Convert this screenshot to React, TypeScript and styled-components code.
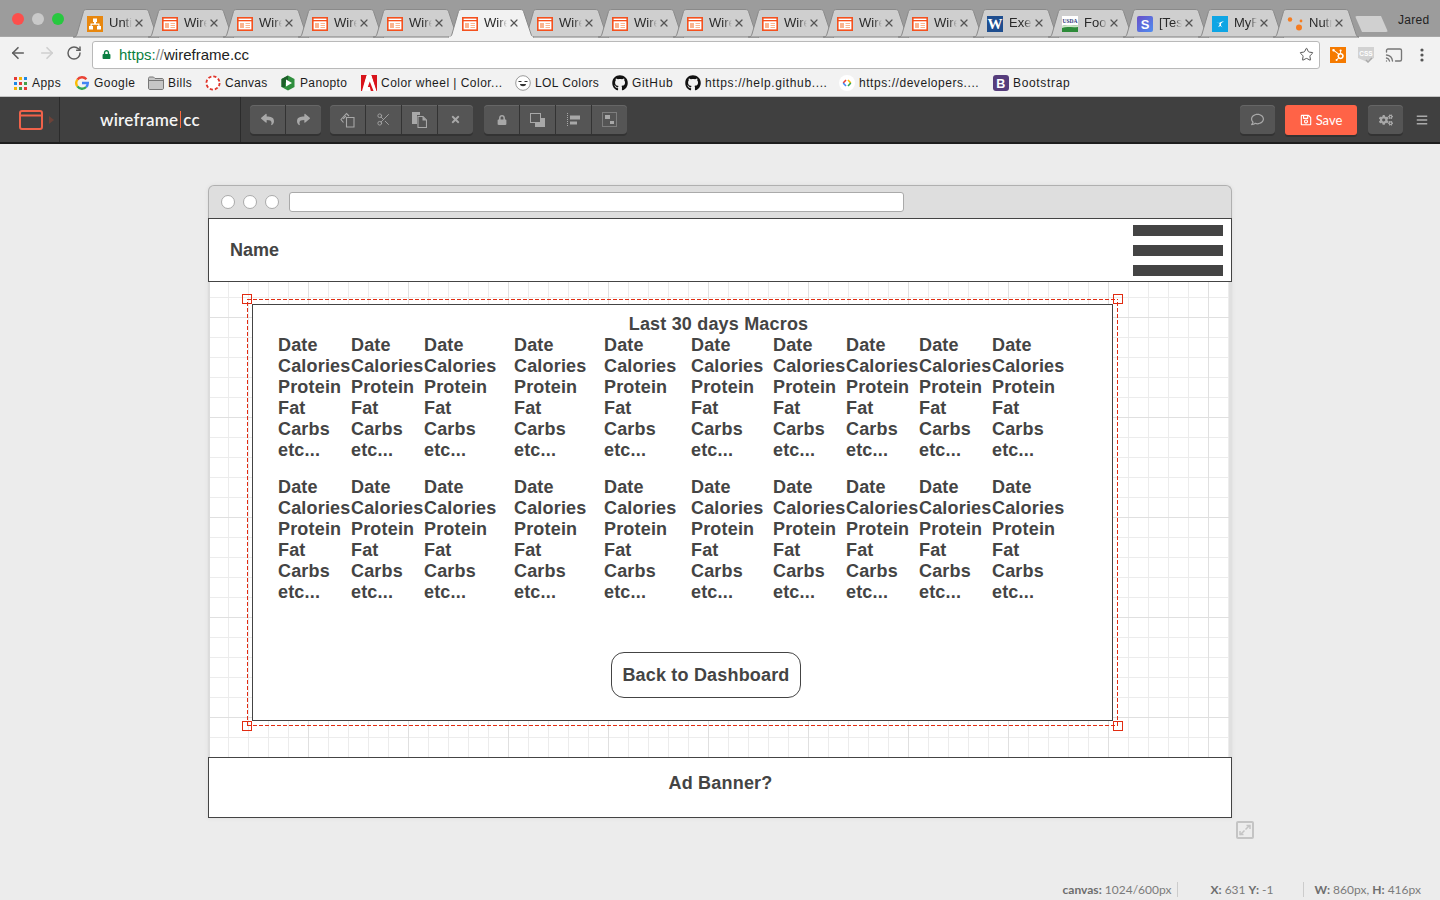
import React from "react";
import styled, { createGlobalStyle } from "styled-components";
import { ArrowLeft, ArrowRight, RotateCw, Star, Cast, X, Scissors } from "lucide-react";
import { FaReply, FaShare, FaTimes, FaLock, FaRegSave, FaRegComment, FaCogs, FaBars, FaGithub } from "react-icons/fa";
import { SiHubspot } from "react-icons/si";

const Global = createGlobalStyle`
  html, body { margin: 0; padding: 0; height: 900px; overflow: hidden; background: #ececec; }
  #root { height: 900px; }
  * { box-sizing: border-box; }
`;
const Page = styled.div`display:flex;flex-direction:column;width:1440px;height:900px;font-family:"Liberation Sans",Arial,sans-serif;background:#ececec;`;

/* ---------- browser tab strip ---------- */
const TabStrip = styled.div`display:flex;align-items:flex-end;height:37px;background:#9c9c9c;padding-left:73px;position:relative;border-bottom:1px solid #a8a8a8;`;
const Traffic = styled.div`position:absolute;left:12px;top:13px;display:flex;gap:8px;`;
const Light = styled.span<{ $c: string }>`width:12px;height:12px;border-radius:50%;background:${p => p.$c};`;
const TabEl = styled.div<{ $active?: boolean }>`
  position:relative;width:86px;height:28px;margin-right:-11px;flex:none;
  margin-bottom:-1px;z-index:${p => (p.$active ? 5 : 1)};
`;
const TabShape = styled.svg`position:absolute;left:0;top:0;width:86px;height:29px;`;
const TabIcon = styled.span`position:absolute;left:14px;top:7px;width:16px;height:16px;display:flex;`;
const TabText = styled.span`position:absolute;left:36px;top:6px;width:23px;font-size:13px;line-height:16px;color:#2a2a2a;white-space:nowrap;overflow:hidden;
  -webkit-mask-image:linear-gradient(90deg,#000 65%,transparent 100%);mask-image:linear-gradient(90deg,#000 65%,transparent 100%);`;
const TabClose = styled.span`position:absolute;left:60px;top:8px;width:12px;height:12px;display:flex;color:#555;`;
const NewTab = styled.span`position:absolute;left:1355px;top:16px;width:33px;height:16px;background:#d0d0d0;clip-path:polygon(0 0,26px 0,33px 100%,7px 100%);border-radius:2px;`;
const Profile = styled.span`position:absolute;left:1398px;top:13px;font-size:12px;line-height:14px;color:#222;letter-spacing:.3px;`;

/* ---------- browser toolbar ---------- */
const NavBar = styled.div`display:flex;align-items:center;height:33px;background:#f2f2f2;padding:0 0 1px 9px;`;
const NavBtn = styled.span<{ $off?: boolean; $w: number }>`display:flex;width:${p => p.$w}px;color:${p => (p.$off ? "#cfcfcf" : "#5f5f5f")};flex:none;`;
const Omni = styled.div`display:flex;align-items:center;width:1228px;height:28px;margin-top:3px;background:#fff;border:1px solid #b9b9b9;border-radius:3px;padding:0 5px 0 9px;flex:none;`;
const Url = styled.span`flex:1;font-size:15px;line-height:16px;color:#222;margin-left:8px;`;
const Green = styled.span`color:#0b7f3f;`;
const Grey = styled.span`color:#888;`;
const Ext = styled.div`display:flex;align-items:center;margin-left:10px;height:28px;margin-top:3px;`;
const ExtIcon = styled.span<{ $ml?: number; $w?: number }>`display:flex;align-items:center;justify-content:center;flex:none;height:16px;width:${p => p.$w ?? 16}px;margin-left:${p => p.$ml ?? 0}px;`;
const HubIcon = styled(ExtIcon)`background:#f57a00;color:#fff;`;
const Bookmarks = styled.div`display:flex;align-items:center;height:27px;background:#f2f2f2;padding-left:12px;border-bottom:1px solid #c4c4c4;`;
const Mark = styled.div<{ $w: number; $ls: number }>`display:flex;align-items:center;gap:4px;width:${p => p.$w}px;flex:none;font-size:12px;letter-spacing:${p => p.$ls}px;color:#1c1c1c;white-space:nowrap;`;
const MarkIcon = styled.span`display:flex;width:16px;height:16px;flex:none;align-items:center;justify-content:center;`;

/* ---------- app toolbar ---------- */
const AppBar = styled.div`display:flex;align-items:center;height:47px;background:#404040;border-bottom:2px solid #1e1e1e;position:relative;`;
const LogoCell = styled.div`display:flex;align-items:center;width:60px;height:45px;border-right:1px solid #2b2b2b;padding-left:19px;gap:6px;flex:none;`;
const BrandCell = styled.div`display:flex;align-items:center;justify-content:flex-start;width:181px;height:45px;border-right:1px solid #2b2b2b;padding-left:40px;font-family:Lato,sans-serif;font-size:17px;font-weight:600;letter-spacing:.2px;color:#f4f4f4;flex:none;`;
const Bar = styled.span`display:inline-block;width:1px;height:17px;background:#ff6a3d;margin:0 2px;`;
const Group = styled.div<{ $ml: number }>`display:flex;margin-left:${p => p.$ml}px;height:29px;border-radius:4px;background:#555;box-shadow:0 2px 0 #333, inset 0 1px 0 #666;flex:none;overflow:hidden;`;
const ToolBtn = styled.span`display:flex;align-items:center;justify-content:center;width:36px;height:29px;color:#a8a8a8;border-left:1px solid #333;&:first-child{border-left:0;width:35px;}`;
const SaveBtn = styled.span`display:flex;align-items:center;justify-content:center;gap:4px;width:72px;height:30px;margin-left:10px;background:#ff6347;color:#fff;font-family:Lato,sans-serif;font-size:13px;border-radius:3px;box-shadow:0 2px 0 #333;flex:none;`;
const Burger = styled.span`display:flex;margin-left:13px;color:#aaa;flex:none;`;

/* ---------- workspace ---------- */
const Workspace = styled.main`flex:1;display:flex;flex-direction:column;padding:41px 0 0 208px;min-height:0;position:relative;`;
const Frame = styled.div`width:1024px;display:flex;flex-direction:column;box-shadow:0 0 3px 1px #e2e2e2;border-radius:6px 6px 0 0;`;
const FrameHead = styled.div`display:flex;align-items:center;height:33px;background:#dedede;border:1px solid #b0b0b0;border-bottom:0;border-radius:6px 6px 0 0;padding-left:12px;gap:8px;`;
const Dot = styled.span`width:14px;height:14px;border-radius:50%;background:#fff;border:1px solid #aaa;flex:none;`;
const FrameUrl = styled.span`width:615px;height:20px;margin-left:2px;background:#fff;border:1px solid #aaa;border-radius:3px;flex:none;`;
const NameBox = styled.div`display:flex;align-items:center;justify-content:space-between;height:64px;background:#fff;border:1px solid #444;padding:0 8px 0 21px;`;
const Label = styled.span`font-size:18px;font-weight:700;color:#444;line-height:21px;`;
const Menu = styled.div`display:flex;flex-direction:column;gap:9px;`;
const MenuBar = styled.span`display:block;width:90px;height:11px;background:#444;`;
const GridArea = styled.div`
  position:relative;height:475px;background-color:#fff;
  background-image:
    linear-gradient(90deg,#e0e0e0 1px,transparent 1px),
    linear-gradient(#e0e0e0 1px,transparent 1px),
    linear-gradient(90deg,#ececec 1px,transparent 1px),
    linear-gradient(#ececec 1px,transparent 1px);
  background-size:100px 100px,100px 100px,20px 20px,20px 20px;
  background-position:0 0,0 35px,0 0,0 15px;
  box-shadow:inset 2px 0 0 #dcdcdc, inset -3px 0 0 #e0e0e0;
`;
const Selection = styled.div`
  position:absolute;left:39px;top:17px;width:871px;height:427px;padding:5px;
  background:
    repeating-linear-gradient(90deg,#e12c12 0 4px,transparent 4px 6px) 0 0/100% 1px no-repeat,
    repeating-linear-gradient(90deg,#e12c12 0 4px,transparent 4px 6px) 0 100%/100% 1px no-repeat,
    repeating-linear-gradient(0deg,#e12c12 0 4px,transparent 4px 6px) 0 0/1px 100% no-repeat,
    repeating-linear-gradient(0deg,#e12c12 0 4px,transparent 4px 6px) 100% 0/1px 100% no-repeat;
`;
const Handle = styled.span<{ $x: "l" | "r"; $y: "t" | "b" }>`
  position:absolute;width:10px;height:10px;border:1px solid #e12c12;background:transparent;
  ${p => (p.$x === "l" ? "left:-5px;" : "right:-5px;")}
  ${p => (p.$y === "t" ? "top:-5px;" : "bottom:-5px;")}
`;
const Box = styled.div`width:861px;height:417px;background:#fff;border:1px solid #444;padding:9px 0 0 25px;color:#444;font-weight:700;font-size:18px;line-height:21px;letter-spacing:.18px;`;
const Title = styled.div`text-align:center;padding-left:47px;`;
const Table = styled.div`display:grid;grid-template-columns:73px 73px 90px 90px 87px 82px 73px 73px 73px 73px;margin-bottom:16px;`;
const Cell = styled.div`white-space:nowrap;`;
const BackBtn = styled.div`display:flex;align-items:center;justify-content:center;width:190px;height:46px;margin:49px 0 0 333px;border:1px solid #444;border-radius:13px;background:#fff;`;
const AdBox = styled.div`display:flex;justify-content:center;padding:15px 0 0 1px;height:61px;background:#fff;border:1px solid #444;`;
const AdLabel = styled(Label)`letter-spacing:.2px;`;
const ResizeRow = styled.div`display:flex;margin:3px 0 0 1028px;color:#c4c4c4;`;
const StatusBar = styled.footer`display:flex;align-items:center;margin-top:auto;margin-left:-208px;height:22px;justify-content:flex-end;padding-right:19px;font-family:Lato,sans-serif;font-size:12px;line-height:15px;color:#7b7b7b;`;
const Stat = styled.span<{ $pl?: number; $pr?: number; $sep?: boolean }>`display:block;height:15px;white-space:pre;
  padding-left:${p => p.$pl ?? 0}px;padding-right:${p => p.$pr ?? 0}px;
  ${p => (p.$sep ? "border-right:1px solid #ccc;" : "")}`;
const B = styled.b`font-weight:700;color:#6e6e6e;`;

/* ---------- drawings ---------- */
const WireIcon = () => (
  <svg width="16" height="14" viewBox="0 0 16 14" style={{ marginTop: 1 }}>
    <rect x=".8" y=".8" width="14.4" height="12.4" fill="#fff" stroke="#f4511e" strokeWidth="1.6" />
    <rect x="1" y="3" width="14" height="1.3" fill="#f4511e" />
    <path d="M3 6h4v5H3z" fill="#fbb48f" />
    <path d="M8.500 6H13v1H8.500zM8.500 8H13v1H8.500zM8.500 10H13v1H8.500z" fill="#fbb48f" />
  </svg>
);
const DrawIcon = () => (
  <svg width="16" height="16" viewBox="0 0 16 16">
    <rect width="16" height="16" fill="#e8870e" />
    <path d="M6 2.500h4v3.500H9v1.500h3.500V10H14v3.500h-4V10h1.300V8.700H4.700V10H6v3.500H2V10h1.500V7.500H7V6H6z" fill="#fff" />
  </svg>
);
const WordIcon = () => (
  <svg width="16" height="16" viewBox="0 0 16 16">
    <rect width="16" height="16" fill="#1f4e8f" />
    <text x="8" y="13" textAnchor="middle" fontFamily="Liberation Serif" fontWeight="700" fontSize="15" fill="#fff">W</text>
  </svg>
);
const UsdaIcon = () => (
  <svg width="16" height="16" viewBox="0 0 16 16">
    <rect width="16" height="16" fill="#fff" />
    <text x="8" y="7" textAnchor="middle" fontFamily="Liberation Serif" fontWeight="700" fontSize="5.500" fill="#2c3a7a">USDA</text>
    <path d="M0 10c5-2 10 0 16-1v7H0z" fill="#2e8b3a" />
    <path d="M0 10c5-2 10 0 16-1v2c-6 1-11-1-16 1z" fill="#cfe5c9" />
  </svg>
);
const SlackS = () => (
  <svg width="16" height="16" viewBox="0 0 16 16">
    <defs><linearGradient id="sg" x1="0" y1="0" x2="1" y2="1"><stop offset="0" stopColor="#6a4fc8" /><stop offset="1" stopColor="#4f8ef0" /></linearGradient></defs>
    <rect width="16" height="16" rx="2" fill="url(#sg)" />
    <text x="8" y="12.500" textAnchor="middle" fontFamily="Liberation Sans" fontWeight="700" fontSize="13" fill="#fff">S</text>
  </svg>
);
const MfpIcon = () => (
  <svg width="16" height="16" viewBox="0 0 16 16">
    <rect width="16" height="16" fill="#0ea5e4" />
    <path d="M4 6l3 1 2-1 3-1-3 2.500v2l1.500 2-2-1.500-2.500 1 1.500-2V7.500z" fill="#fff" />
  </svg>
);
const NutIcon = () => (
  <svg width="16" height="16" viewBox="0 0 16 16">
    <circle cx="3" cy="3.500" r="2.200" fill="#f57c20" />
    <circle cx="14" cy="5" r="1.400" fill="#f57c20" />
    <circle cx="12" cy="11.500" r="3" fill="#f57c20" />
  </svg>
);
const AppsIcon = () => {
  const c = ["#e53935", "#f4b400", "#1e88e5", "#1e88e5", "#e53935", "#43a047", "#f4b400", "#43a047", "#e53935"];
  return (
    <svg width="13" height="13" viewBox="0 0 13 13">
      {c.map((f, i) => <rect key={i} x={(i % 3) * 5} y={Math.floor(i / 3) * 5} width="3" height="3" fill={f} />)}
    </svg>
  );
};
const GoogleIcon = () => (
  <svg width="14" height="14" viewBox="0 0 14 14" fill="none" strokeWidth="2.400">
    <path d="M11.400 3.200A5.800 5.800 0 0 0 2.400 3.600" stroke="#ea4335" />
    <path d="M2.400 3.600a5.800 5.800 0 0 0 0 6.800" stroke="#fbbc05" />
    <path d="M2.400 10.400a5.800 5.800 0 0 0 8.800.6" stroke="#34a853" />
    <path d="M11.200 11a5.800 5.800 0 0 0 1.600-4H7" stroke="#4285f4" />
  </svg>
);
const FolderIcon = () => (
  <svg width="16" height="14" viewBox="0 0 16 14">
    <path d="M.5 2.500C.5 1.500 1 1 2 1h3.500l1.500 1.500h7c1 0 1.500.5 1.500 1.500v8c0 1-.5 1.500-1.500 1.500H2c-1 0-1.500-.5-1.500-1.500z" fill="#c6c6c6" stroke="#777" />
    <path d="M1 4.500h14" stroke="#777" />
  </svg>
);
const CanvasIcon = () => (
  <svg width="16" height="16" viewBox="0 0 16 16">
    <circle cx="8" cy="8" r="6.600" fill="#fff" stroke="#e0352b" strokeWidth="1.800" strokeDasharray="3.200 2" />
  </svg>
);
const PanoptoIcon = () => (
  <svg width="16" height="16" viewBox="0 0 16 16">
    <path d="M8 .5 14.500 4v8L8 15.500 1.500 12V4z" fill="#2f8f3e" />
    <path d="M1.500 4 8 .5v5L5 8v4H1.500z" fill="#1d5f2a" />
    <path d="M6 4.500 12 8l-6 3.500z" fill="#fff" />
  </svg>
);
const AdobeIcon = () => (
  <svg width="16" height="16" viewBox="0 0 16 16">
    <rect width="16" height="16" fill="#d8141b" />
    <path d="M5.500 0h5l5 16h-3L8.800 6.500 6.800 12h2l1 4H1z" fill="#fff" />
    <path d="M0 0h5.500L0 16zM16 0h-5.500L16 16z" fill="#d8141b" />
  </svg>
);
const LolIcon = () => (
  <svg width="16" height="16" viewBox="0 0 16 16">
    <circle cx="8" cy="8" r="7.300" fill="#fff" stroke="#999" />
    <path d="M3.500 6.500h3M9.500 6.500h3" stroke="#333" strokeWidth="1" />
    <path d="M5 9h6c0 3-6 3-6 0z" fill="#333" />
  </svg>
);
const DevIcon = () => (
  <svg width="16" height="16" viewBox="0 0 16 16" fill="none" strokeWidth="1.600">
    <circle cx="8" cy="8" r="8" fill="#fff" />
    <path d="M7 5 4.200 8" stroke="#ea4335" />
    <path d="M4.200 8 7 11" stroke="#4285f4" />
    <path d="M9 5l2.800 3" stroke="#fbbc05" />
    <path d="M11.800 8 9 11" stroke="#34a853" />
  </svg>
);
const BootIcon = () => (
  <svg width="16" height="16" viewBox="0 0 16 16">
    <rect width="16" height="16" rx="3" fill="#563d7c" />
    <text x="8" y="12.500" textAnchor="middle" fontFamily="Liberation Sans" fontWeight="700" fontSize="12.500" fill="#fff">B</text>
  </svg>
);
const CssIcon = () => (
  <svg width="16" height="16" viewBox="0 0 16 16">
    <path d="M0 0h16v11l-8 3.500L0 11z" fill="#d2d2d2" />
    <text x="8" y="8.500" textAnchor="middle" fontFamily="Liberation Sans" fontWeight="700" fontSize="6.500" fill="#fff">CSS</text>
    <path d="m8 13 2 2 4-4" stroke="#aaa" strokeWidth="1.500" fill="none" />
  </svg>
);
const DotsIcon = () => (
  <svg width="4" height="14" viewBox="0 0 4 14" fill="#555">
    <circle cx="2" cy="2" r="1.600" /><circle cx="2" cy="7" r="1.600" /><circle cx="2" cy="12" r="1.600" />
  </svg>
);
const CloneIcon = () => (
  <svg width="16" height="16" viewBox="0 0 16 16" fill="none" stroke="#a8a8a8" strokeWidth="1.100">
    <path d="M3.500 10.500 1 7.500 6.500 1.500 9 4" />
    <path d="M3.200 6.800 6 3.800" />
    <path d="M6.500 5.500h7.500v9.500H6.500z" />
  </svg>
);
const PasteIcon = () => (
  <svg width="15" height="16" viewBox="0 0 15 16" fill="#a8a8a8">
    <path d="M0 0h8v3H5v9H0z" />
    <path d="M6 4.500h5l3.500 3.500v7.500H6z" fill="none" stroke="#a8a8a8" strokeWidth="1.100" />
    <path d="M10.500 4.500v4h4z" />
  </svg>
);
const FrontIcon = () => (
  <svg width="15" height="14" viewBox="0 0 15 14">
    <rect x="5" y="5" width="10" height="9" fill="#a8a8a8" />
    <rect x=".5" y=".5" width="10" height="9" fill="#555" stroke="#a8a8a8" />
  </svg>
);
const AlignIcon = () => (
  <svg width="14" height="14" viewBox="0 0 14 14" fill="#a8a8a8">
    <path d="M.5 0v14" stroke="#a8a8a8" strokeDasharray="1 1" />
    <rect x="3" y="2.500" width="10" height="4" />
    <rect x="3" y="8.500" width="7" height="3" />
  </svg>
);
const GroupIcon = () => (
  <svg width="15" height="15" viewBox="0 0 15 15" fill="#a8a8a8">
    <rect x=".5" y=".5" width="14" height="14" fill="none" stroke="#a8a8a8" strokeDasharray="1 1" />
    <rect x="3" y="3" width="5" height="4" />
    <rect x="8" y="9" width="4" height="3" />
  </svg>
);
const LogoIcon = () => (
  <svg width="24" height="20" viewBox="0 0 24 20" fill="none" stroke="#f0624a" strokeWidth="2">
    <rect x="1" y="1" width="22" height="18" rx="2" />
    <path d="M1 5.500h22" />
  </svg>
);
const LogoArrow = () => (
  <svg width="5" height="8" viewBox="0 0 5 8"><path d="M0 0l5 4-5 4z" fill="#6d4238" /></svg>
);
const ResizeIcon = () => (
  <svg width="18" height="18" viewBox="0 0 18 18" fill="none" stroke="currentColor">
    <rect x="1" y="1" width="16" height="16" rx="1" strokeWidth="2" />
    <path d="M10.500 4.500h3.500V8M14 4 9.500 8.500M7.500 13.500H4V10M4 14l4.500-4.500" strokeWidth="1.500" />
  </svg>
);

const wire = { label: "Wire", icon: <WireIcon /> };
const tabs = [
  { label: "Untitled", icon: <DrawIcon /> }, wire, wire, wire, wire, { ...wire, active: true }, wire, wire, wire, wire, wire, wire,
  { label: "Exercise", icon: <WordIcon /> }, { label: "Food", icon: <UsdaIcon /> }, { label: "[Test", icon: <SlackS /> },
  { label: "MyFit", icon: <MfpIcon /> }, { label: "Nutrition", icon: <NutIcon /> },
];

const Tab = ({ label, icon, active }: { label: string; icon: React.ReactNode; active?: boolean }) => (
  <TabEl $active={active}>
    <TabShape viewBox="0 0 86 29">
      <path d="M0.500 28C2.500 28 3.500 27 4 25L10.500 2.500C11 1 12 .5 14 .5H72C74 .5 75 1 75.500 2.500L83 25C83.500 27 84.500 28 86 28"
        fill={active ? "#f2f2f2" : "#cfcfcf"} stroke="#8a8a8a" />
      {active ? <path d="M1 28.500H85" stroke="#f2f2f2" strokeWidth="2" /> : <path d="M0 28H86" stroke="#7f7f7f" />}
    </TabShape>
    <TabIcon>{icon}</TabIcon>
    <TabText>{label}</TabText>
    <TabClose><X size={12} strokeWidth={2.4} /></TabClose>
  </TabEl>
);

const marks: [number, number, React.ReactNode, string][] = [
  [62, .45, <AppsIcon />, "Apps"], [74, .45, <GoogleIcon />, "Google"], [57, .45, <FolderIcon />, "Bills"], [75, .33, <CanvasIcon />, "Canvas"],
  [81, .36, <PanoptoIcon />, "Panopto"], [154, .47, <AdobeIcon />, "Color wheel | Color..."], [97, .4, <LolIcon />, "LOL Colors"],
  [73, .66, <FaGithub size={16} color="#111" />, "GitHub"], [154, .63, <FaGithub size={16} color="#111" />, "https://help.github...."],
  [154, .55, <DevIcon />, "https://developers...."], [90, .66, <BootIcon />, "Bootstrap"],
];

const columns = 10;
const lines = ["Date", "Calories", "Protein", "Fat", "Carbs", "etc..."];
const MacroTable = () => (
  <Table>
    {Array.from({ length: columns }, (_, c) => (
      <Cell key={c}>{lines.map(l => <div key={l}>{l}</div>)}</Cell>
    ))}
  </Table>
);

export default function App() {
  return (
    <Page>
      <Global />
      <TabStrip>
        <Traffic><Light $c="#fc4f4c" /><Light $c="#c9c9c9" /><Light $c="#27c83f" /></Traffic>
        {tabs.map((t, i) => <Tab key={i} {...t} />)}
        <NewTab />
        <Profile>Jared</Profile>
      </TabStrip>
      <NavBar>
        <NavBtn $w={29}><ArrowLeft size={18} strokeWidth={2.2} /></NavBtn>
        <NavBtn $w={28} $off><ArrowRight size={18} strokeWidth={2.2} /></NavBtn>
        <NavBtn $w={26}><RotateCw size={16} strokeWidth={2.2} /></NavBtn>
        <Omni>
          <FaLock size={9} color="#0b8043" />
          <Url><Green>https:</Green><Grey>//</Grey>wireframe.cc</Url>
          <Star size={15} color="#555" strokeWidth={1.6} />
        </Omni>
        <Ext>
          <HubIcon><SiHubspot size={12} /></HubIcon>
          <ExtIcon $ml={12}><CssIcon /></ExtIcon>
          <ExtIcon $ml={11} $w={18}><Cast size={18} color="#777" strokeWidth={1.8} /></ExtIcon>
          <ExtIcon $ml={17} $w={4}><DotsIcon /></ExtIcon>
        </Ext>
      </NavBar>
      <Bookmarks>
        {marks.map(([w, ls, icon, text]) => (
          <Mark key={text} $w={w} $ls={ls}><MarkIcon>{icon}</MarkIcon>{text}</Mark>
        ))}
      </Bookmarks>
      <AppBar>
        <LogoCell><LogoIcon /><LogoArrow /></LogoCell>
        <BrandCell>wireframe<Bar />cc</BrandCell>
        <Group $ml={9}>
          <ToolBtn><FaReply size={13} /></ToolBtn><ToolBtn><FaShare size={13} /></ToolBtn>
        </Group>
        <Group $ml={9}>
          <ToolBtn><CloneIcon /></ToolBtn><ToolBtn><Scissors size={15} strokeWidth={1.4} /></ToolBtn><ToolBtn><PasteIcon /></ToolBtn><ToolBtn><FaTimes size={11} /></ToolBtn>
        </Group>
        <Group $ml={11}>
          <ToolBtn><FaLock size={10} /></ToolBtn><ToolBtn><FrontIcon /></ToolBtn><ToolBtn><AlignIcon /></ToolBtn><ToolBtn><GroupIcon /></ToolBtn>
        </Group>
        <Group $ml={613}><ToolBtn><FaRegComment size={13} /></ToolBtn></Group>
        <SaveBtn><FaRegSave size={12} />Save</SaveBtn>
        <Group $ml={11}><ToolBtn><FaCogs size={14} /></ToolBtn></Group>
        <Burger><FaBars size={12} /></Burger>
      </AppBar>
      <Workspace>
        <Frame>
          <FrameHead>
            <Dot /><Dot /><Dot />
            <FrameUrl />
          </FrameHead>
          <NameBox>
            <Label>Name</Label>
            <Menu><MenuBar /><MenuBar /><MenuBar /></Menu>
          </NameBox>
          <GridArea>
            <Selection>
              <Handle $x="l" $y="t" /><Handle $x="r" $y="t" /><Handle $x="l" $y="b" /><Handle $x="r" $y="b" />
              <Box>
                <Title>Last 30 days Macros</Title>
                <MacroTable />
                <MacroTable />
                <BackBtn>Back to Dashboard</BackBtn>
              </Box>
            </Selection>
          </GridArea>
          <AdBox><AdLabel>Ad Banner?</AdLabel></AdBox>
        </Frame>
        <ResizeRow><ResizeIcon /></ResizeRow>
        <StatusBar>
          <Stat $sep $pr={6}><B>canvas:</B> 1024/600px</Stat>
          <Stat $sep $pl={32} $pr={30}><B>X:</B> 631 <B>Y:</B> -1</Stat>
          <Stat $pl={10}><B>W:</B> 860px, <B>H:</B> 416px</Stat>
        </StatusBar>
      </Workspace>
    </Page>
  );
}
